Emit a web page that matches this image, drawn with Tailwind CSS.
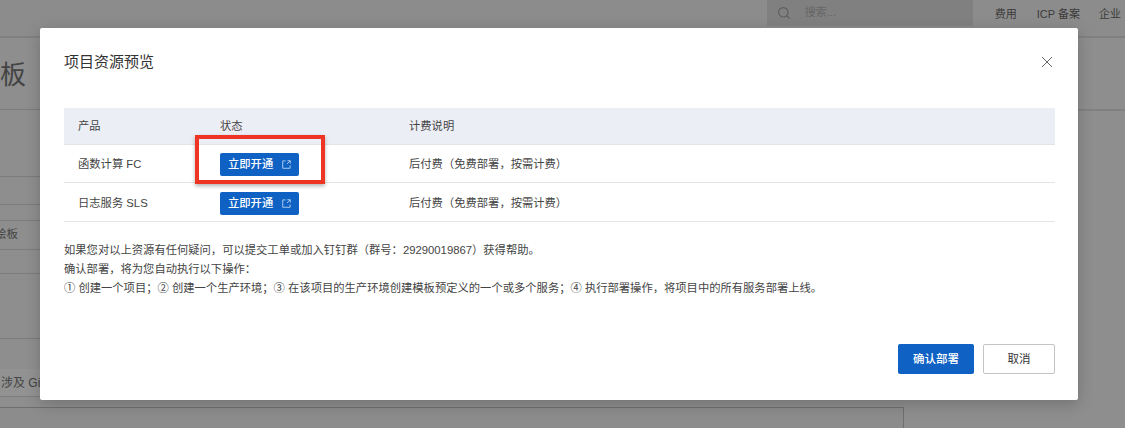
<!DOCTYPE html>
<html lang="zh">
<head>
    <meta charset="utf-8">
    <title>项目资源预览</title>
    <script src="https://cdn.jsdelivr.net/npm/@tailwindcss/browser@4"></script>
</head>
<body class="bg-[#8e8e8e] text-[#333] font-['Liberation_Sans','Noto_Sans_CJK_SC',sans-serif]">
    <div class="relative h-[428px] w-[1125px] overflow-hidden">
        <!-- Page behind the dialog -->
        <header class="h-[38px] flex items-center justify-end border-b-2 border-[#808080] bg-[#8c8c8c] text-[11px] text-[#3a3a3a]">
            <div class="w-[206px] h-[27px] -mt-[11px] mr-[22px] pl-[10px] flex items-center gap-[14px] bg-[#808080] text-[#666]">
                <svg class="w-[14px] h-[14px]" viewBox="0 0 16 16" fill="none" stroke="#5c5c5c" stroke-width="1.3"><circle cx="7.2" cy="7.2" r="5.4"/><path d="M11 11l3.4 3.4"/></svg>
                <span>搜索...</span>
            </div>
            <span class="mr-[20px] -mt-[7px]">费用</span>
            <span class="mr-[19px] -mt-[7px]">ICP 备案</span>
            <span class="w-[26px] whitespace-nowrap -mt-[7px]">企业</span>
        </header>
        <div class="flex h-[369px] justify-between">
            <div class="w-[40px] flex flex-col text-[#444]">
                <div class="h-[72px] border-b border-[#7c7c7c] overflow-hidden flex items-center text-[26px] leading-none"><span class="mt-[2px]">板</span></div>
                <div class="h-[67px] border-b border-[#7c7c7c]"></div>
                <div class="h-[28px] border-b border-[#7c7c7c]"></div>
                <div class="h-[16px] border-b border-[#7c7c7c]"></div>
                <div class="h-[29px] border-b border-[#7c7c7c] overflow-hidden flex items-center text-[11.5px] whitespace-nowrap"><span class="-ml-[5px]">绘板</span></div>
                <div class="h-[24px] border-b border-[#7c7c7c]"></div>
                <div class="h-[65px] border-b border-[#7c7c7c]"></div>
                <div class="h-[30px]"></div>
                <div class="h-[28px] border-b border-[#7c7c7c] bg-[#929292] overflow-hidden flex items-center text-[12px] whitespace-nowrap"><span class="ml-[1px] mt-[1px]">涉及 Git</span></div>
            </div>
            <div class="w-[47px] h-[73px] border-b-2 border-[#808080]"></div>
        </div>
        <div class="h-[21px] w-[904px] border-t border-r border-[#6f6f6f] bg-[#8c8c8c]"></div>

        <!-- Dialog -->
        <div class="absolute left-[40px] top-[28px] w-[1038px] h-[372px] flex flex-col bg-white rounded-[2px] px-[24px] shadow-[0_4px_16px_rgba(0,0,0,0.2)]">
            <div class="h-[80px] flex items-center justify-between">
                <h2 class="text-[15px] -mt-[11px] text-[#333]">项目资源预览</h2>
                <svg class="w-[12px] h-[12px] -mt-[12px] mr-[1px]" viewBox="0 0 12 12" fill="none" stroke="#666" stroke-width="1"><path d="M1 1l10 10M11 1L1 11"/></svg>
            </div>
            <div class="w-[991px] text-[11.3px] text-[#444]">
                <div class="h-[37px] grid grid-cols-[142px_189px_1fr] items-center pl-[14px] bg-[#eceef5] border-b border-[#e4e4e4]">
                    <span>产品</span><span>状态</span><span>计费说明</span>
                </div>
                <div class="h-[38px] pt-[2px] grid grid-cols-[142px_189px_1fr] items-center pl-[14px] border-b border-[#e4e4e4]">
                    <span>函数计算 FC</span>
                    <a class="w-[79px] h-[23px] flex items-center justify-between pl-[8px] pr-[8px] rounded-[2px] bg-[#0f62c4] text-white font-medium">
                        <span>立即开通</span>
                        <svg class="w-[9px] h-[9px]" viewBox="0 0 10 10" fill="none" stroke="#b9d2f0" stroke-width="1"><path d="M4 1H.8v8.2H9V6M6 .8h3.2V4M9 1L5.5 4.5"/></svg>
                    </a>
                    <span>后付费（免费部署，按需计费）</span>
                </div>
                <div class="h-[39px] pt-[2px] grid grid-cols-[142px_189px_1fr] items-center pl-[14px] border-b border-[#e4e4e4]">
                    <span>日志服务 SLS</span>
                    <a class="w-[79px] h-[23px] flex items-center justify-between pl-[8px] pr-[8px] rounded-[2px] bg-[#0f62c4] text-white font-medium">
                        <span>立即开通</span>
                        <svg class="w-[9px] h-[9px]" viewBox="0 0 10 10" fill="none" stroke="#b9d2f0" stroke-width="1"><path d="M4 1H.8v8.2H9V6M6 .8h3.2V4M9 1L5.5 4.5"/></svg>
                    </a>
                    <span>后付费（免费部署，按需计费）</span>
                </div>
            </div>
            <div class="mt-[19px] text-[11.3px] leading-[19px] text-[#444]">
                <p>如果您对以上资源有任何疑问，可以提交工单或加入钉钉群（群号：29290019867）获得帮助。</p>
                <p>确认部署，将为您自动执行以下操作：</p>
                <p>① 创建一个项目；② 创建一个生产环境；③ 在该项目的生产环境创建模板预定义的一个或多个服务；④ 执行部署操作，将项目中的所有服务部署上线。</p>
            </div>
            <div class="mt-[46px] w-[991px] flex justify-end gap-[9px] text-[11.5px]">
                <button class="w-[76px] h-[30px] pt-[1px] rounded-[2px] bg-[#0f62c4] text-white font-medium">确认部署</button>
                <button class="w-[72px] h-[30px] pt-[1px] rounded-[2px] border border-[#c4c4c4] bg-white text-[#333]">取消</button>
            </div>
        </div>

        <!-- Red annotation box -->
        <div class="absolute left-[195px] top-[135px] w-[130px] h-[49px] border-[4px] border-[#ee3524] shadow-[0_2px_4px_rgba(0,0,0,0.3)]"></div>
    </div>
</body>
</html>
